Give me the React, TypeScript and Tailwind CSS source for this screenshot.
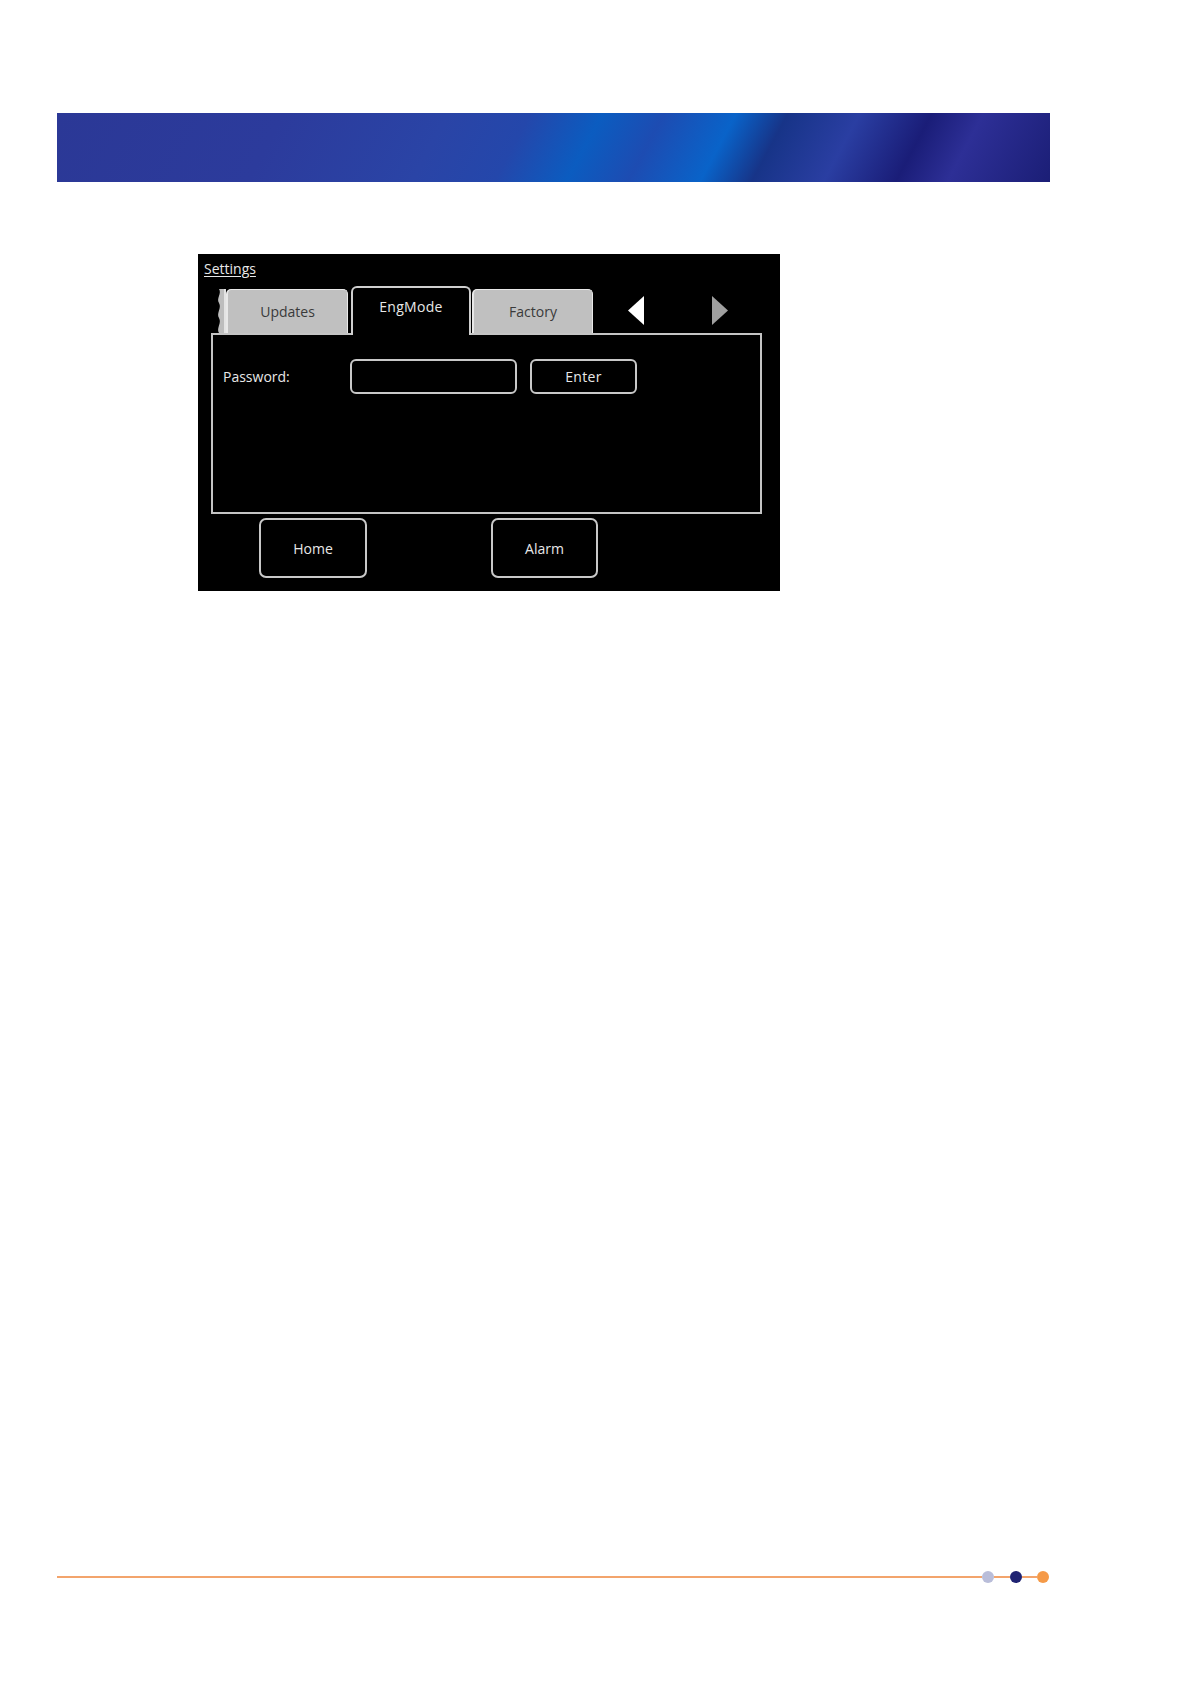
import React from "react";

const font = "font-['Open_Sans','Noto_Sans',sans-serif]";

function ArrowLeft({ color }: { color: string }) {
  return (
    <svg width="16" height="29" viewBox="0 0 16 29">
      <polygon points="16,0 16,29 0,14.5" fill={color} />
    </svg>
  );
}

function ArrowRight({ color }: { color: string }) {
  return (
    <svg width="16" height="29" viewBox="0 0 16 29">
      <polygon points="0,0 0,29 16,14.5" fill={color} />
    </svg>
  );
}

// the clipped tab peeking out at the left of the strip
function TabStub() {
  return (
    <svg width="10" height="44" viewBox="0 0 10 44" className="mb-[2px]">
      <path
        d="M3 0 C6 5 0 9 3 14 C6 19 0 24 3 29 C6 34 0 39 3 44 L10 44 L10 0 Z"
        fill="#bdbdbd"
      />
      <line x1="9" y1="0" x2="9" y2="44" stroke="#f0f0f0" strokeWidth="1.5" />
    </svg>
  );
}

function GreyTab({ label, width }: { label: string; width: string }) {
  return (
    <div
      className={`${width} mb-[2px] flex h-[44px] items-center justify-center rounded-t-[5px] border-l-2 border-t border-r border-[#e8e8e8] bg-[#c0c0c0] text-[14px] text-[#3a3a3a]`}
    >
      {label}
    </div>
  );
}

export default function App() {
  return (
    <div className={`min-h-[1684px] w-[1190px] bg-white ${font}`}>
      {/* header banner */}
      <div className="ml-[57px] pt-[113px]">
        <div className="h-[69px] w-[993px] bg-[linear-gradient(118deg,#2b3896_0%,#2c3b9c_22%,#2a44a6_38%,#2447ab_46%,#0b5cc0_53%,#1d4cb2_59%,#0963c9_66%,#173488_71%,#2a3ea2_78%,#1a1d78_85%,#2d2f96_90%,#1b1e76_100%)]" />
      </div>

      {/* device screen */}
      <div className="ml-[198px] mt-[72px] flex h-[337px] w-[582px] flex-col bg-black">
        <div className="pl-[6px] pt-[6px] text-[14px] leading-[18px] text-[#e8e8e8] underline underline-offset-2">
          Settings
        </div>

        <div className="relative z-10 mt-[10px] -mb-[2px] flex h-[47px] items-end pl-[18px]">
          <TabStub />
          <GreyTab label="Updates" width="w-[122px]" />
          <div className="ml-[3px] flex h-[49px] w-[120px] items-start justify-center rounded-t-[6px] border-2 border-b-0 border-[#cfcfcf] bg-black pt-[8px] text-[14px] tracking-[0.3px] text-[#e8e8e8]">
            EngMode
          </div>
          <div className="ml-[1px] flex items-end">
            <GreyTab label="Factory" width="w-[121px]" />
          </div>
          <div className="mb-[10px] ml-[35px]">
            <ArrowLeft color="#ffffff" />
          </div>
          <div className="mb-[10px] ml-[68px]">
            <ArrowRight color="#a0a0a0" />
          </div>
        </div>

        <div className="ml-[13px] h-[181px] w-[551px] border-2 border-[#c4c4c4] pl-[10px] pt-[24px]">
          <div className="flex items-center">
            <div className="w-[127px] text-[14px] text-[#e8e8e8]">Password:</div>
            <div className="h-[35px] w-[167px] rounded-[6px] border-2 border-[#c8c8c8]" />
            <div className="ml-[13px] flex h-[35px] w-[107px] items-center justify-center rounded-[6px] border-2 border-[#c8c8c8] text-[14px] tracking-[0.3px] text-[#e8e8e8]">
              Enter
            </div>
          </div>
        </div>

        <div className="mt-[4px] flex">
          <div className="ml-[61px] flex h-[60px] w-[108px] items-center justify-center rounded-[7px] border-2 border-[#c8c8c8] text-[14px] text-[#e8e8e8]">
            Home
          </div>
          <div className="ml-[124px] flex h-[60px] w-[107px] items-center justify-center rounded-[7px] border-2 border-[#c8c8c8] text-[14px] text-[#e8e8e8]">
            Alarm
          </div>
        </div>
      </div>

      {/* footer rule */}
      <div className="ml-[57px] mt-[980px] flex h-[12px] items-center">
        <div className="h-[2px] w-[925px] bg-[#f3a46c]" />
        <div className="h-[12px] w-[12px] rounded-full bg-[#b9bdd9]" />
        <div className="h-[2px] w-[16px] bg-[#f3a46c]" />
        <div className="h-[12px] w-[12px] rounded-full bg-[#1f2372]" />
        <div className="h-[2px] w-[15px] bg-[#f3a46c]" />
        <div className="h-[12px] w-[12px] rounded-full bg-[#f59a48]" />
      </div>
    </div>
  );
}
